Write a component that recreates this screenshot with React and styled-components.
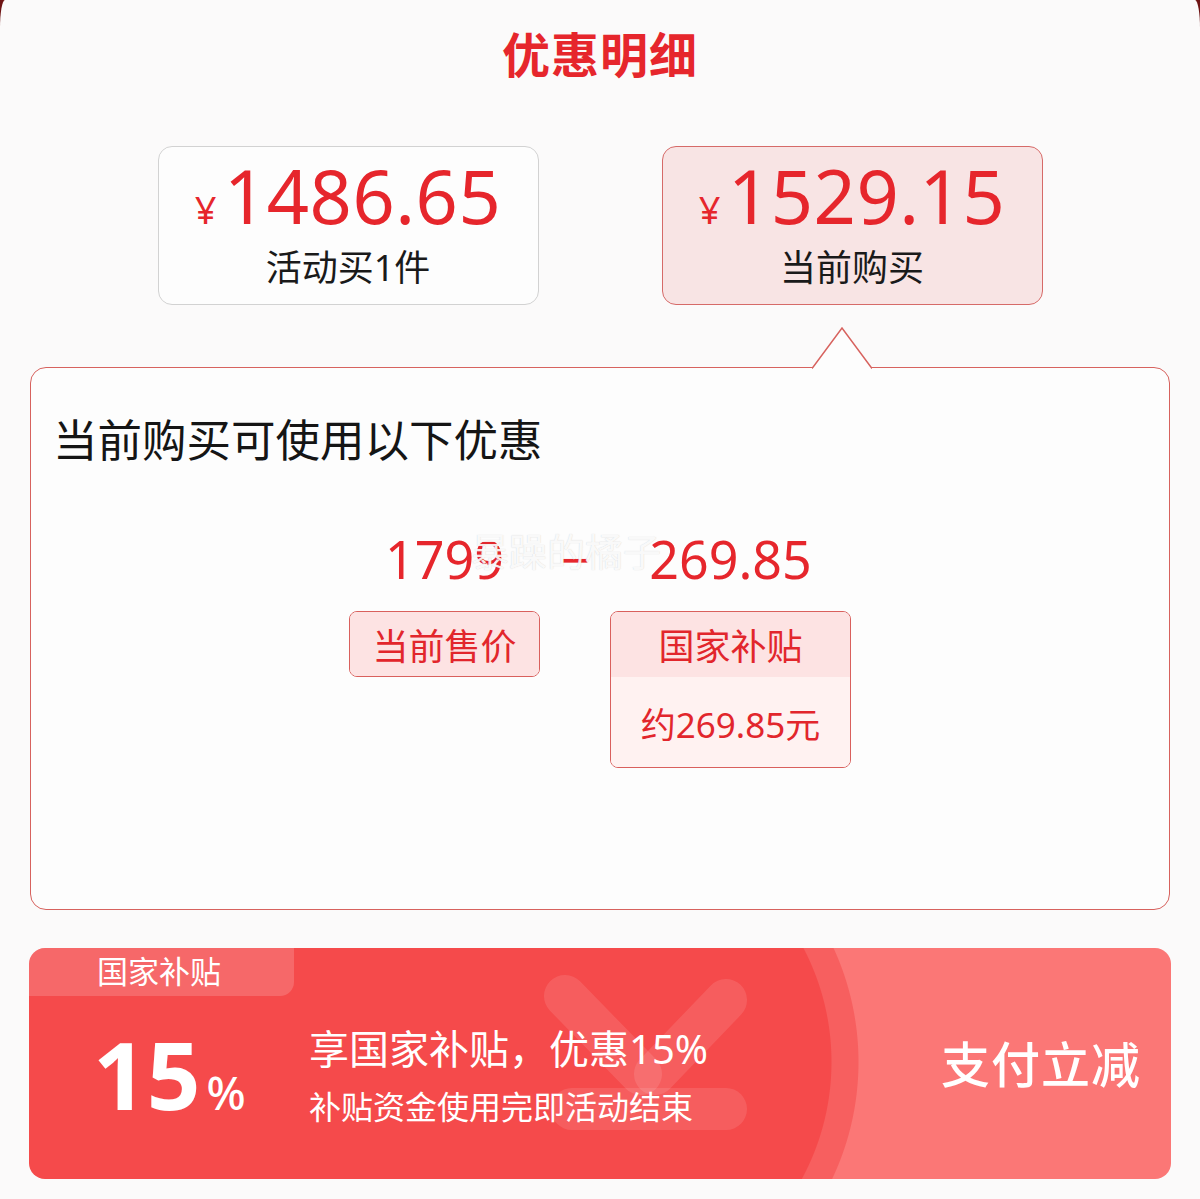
import React from "react";
import styled, { createGlobalStyle } from "styled-components";

const GlobalStyle = createGlobalStyle`
  html, body {
    margin: 0;
    padding: 0;
    background: #6e1414;
  }
  body {
    font-family: "Noto Sans", "Noto Sans CJK SC", sans-serif;
  }
`;

const Sheet = styled.div`
  width: 1200px;
  height: 1199px;
  box-sizing: border-box;
  background: #fbfafa;
  border-radius: 5px 5px 0 0 / 28px 28px 0 0;
  overflow: hidden;
  display: flex;
  flex-direction: column;
  align-items: center;
`;

const Title = styled.h1`
  margin: 26px 0 0;
  font-size: 48px;
  line-height: 58px;
  font-weight: 700;
  color: #e6262c;
  letter-spacing: 1px;
`;

const CardRow = styled.div`
  display: flex;
  gap: 123px;
  margin-top: 62px;
`;

const PriceCard = styled.div`
  width: 381px;
  height: 159px;
  box-sizing: border-box;
  border-radius: 14px;
  border: 1.5px solid ${(p) => (p.active ? "#d66a68" : "#d2d2d2")};
  background: ${(p) => (p.active ? "#f8e4e4" : "#fdfdfd")};
  display: flex;
  flex-direction: column;
  align-items: center;
  padding-top: 9px;
`;

const Price = styled.div`
  display: flex;
  align-items: baseline;
  color: #e6262c;
  font-size: 74px;
  line-height: 80px;
  letter-spacing: 0.5px;
`;

const Yen = styled.span`
  font-size: 38px;
  margin-right: 7px;
`;

const CardLabel = styled.div`
  margin-top: -3px;
  font-size: 36px;
  line-height: 44px;
  color: #1a1a1a;
`;

const Bubble = styled.div`
  position: relative;
  width: 1140px;
  height: 543px;
  box-sizing: border-box;
  margin-top: 62px;
  border: 1.5px solid #d7625e;
  border-radius: 16px;
  background: #fdfdfd;
  padding: 46px 0 0 22px;
`;

const Pointer = styled.svg`
  position: absolute;
  left: 781px;
  top: -42px;
`;

const BubbleHeading = styled.h2`
  margin: 0;
  font-size: 44.5px;
  line-height: 52px;
  font-weight: 400;
  color: #151515;
`;

const Formula = styled.div`
  display: flex;
  justify-content: center;
  margin: 63px 22px 0 0;
`;

const Column = styled.div`
  display: flex;
  flex-direction: column;
  align-items: center;
  width: ${(p) => p.w}px;
`;

const Amount = styled.div`
  font-size: 52px;
  line-height: 60px;
  color: #e6262c;
`;

const Minus = styled(Amount)`
  width: 70px;
  text-align: center;
`;

const Tag = styled.div`
  margin-top: 22px;
  width: 100%;
  box-sizing: border-box;
  border: 1.5px solid #d9605d;
  border-radius: 8px;
  overflow: hidden;
  color: #e2262c;
  font-size: 36px;
`;

const TagPart = styled.div`
  display: flex;
  align-items: center;
  justify-content: center;
  height: ${(p) => p.h}px;
  background: ${(p) => (p.light ? "#fff2f1" : "#fde3e3")};
  font-size: ${(p) => (p.light ? 35 : 36)}px;
`;

const Watermark = styled.div`
  position: absolute;
  left: 440px;
  top: 160px;
  font-size: 38px;
  line-height: 46px;
  color: rgba(255, 255, 255, 0.9);
  text-shadow: 0 0 1px rgba(120, 120, 120, 0.35);
  pointer-events: none;
`;

const Banner = styled.div`
  position: relative;
  width: 1142px;
  height: 231px;
  margin-top: 38px;
  border-radius: 16px;
  overflow: hidden;
  color: #fff;
  background:
    linear-gradient(to right, #f54a4b 0 557px, transparent 557px),
    radial-gradient(circle 272px at 557px 114px, #f54a4b 0 245px, #f75f5f 246px 272px, transparent 273px),
    #fb7776;
`;

const CoinMark = styled.svg`
  position: absolute;
  left: 0;
  top: 0;
`;

const BannerTab = styled.div`
  position: relative;
  width: 265px;
  height: 48px;
  box-sizing: border-box;
  padding-left: 68px;
  background: rgba(255, 255, 255, 0.17);
  border-bottom-right-radius: 14px;
  font-size: 31px;
  line-height: 46px;
`;

const BannerBody = styled.div`
  position: relative;
  display: flex;
  align-items: center;
  height: 183px;
  padding: 0 0 0 64px;
  box-sizing: border-box;
  margin-top: -12px;
`;

const Percent = styled.div`
  width: 216px;
  font-weight: 700;
  font-size: 94px;
  line-height: 100px;
  margin-top: 14px;
  span {
    font-size: 46px;
    font-weight: 500;
    margin-left: 6px;
  }
`;

const BannerText = styled.div`
  flex: 1;
  display: flex;
  flex-direction: column;
`;

const BannerMain = styled.div`
  font-size: 40px;
  line-height: 50px;
`;

const BannerSub = styled.div`
  font-size: 32px;
  line-height: 42px;
  margin-top: 12px;
`;

const PayCut = styled.div`
  width: 230px;
  font-size: 49px;
  font-weight: 500;
  line-height: 60px;
  letter-spacing: 1px;
  margin-bottom: 24px;
`;

export default function App() {
  return (
    <>
      <GlobalStyle />
      <Sheet>
        <Title>优惠明细</Title>
        <CardRow>
          <PriceCard>
            <Price>
              <Yen>¥</Yen>1486.65
            </Price>
            <CardLabel>活动买1件</CardLabel>
          </PriceCard>
          <PriceCard active>
            <Price>
              <Yen>¥</Yen>1529.15
            </Price>
            <CardLabel>当前购买</CardLabel>
          </PriceCard>
        </CardRow>
        <Bubble>
          <Pointer width="60" height="44" viewBox="0 0 60 44">
            <path d="M0 42.5 L30 2 L60 42.5" fill="#fdfdfd" stroke="#d7625e" strokeWidth="1.5" />
            <rect x="1" y="42.5" width="58" height="2" fill="#fdfdfd" />
          </Pointer>
          <BubbleHeading>当前购买可使用以下优惠</BubbleHeading>
          <Formula>
            <Column w={191}>
              <Amount>1799</Amount>
              <Tag>
                <TagPart h={64}>当前售价</TagPart>
              </Tag>
            </Column>
            <Minus>−</Minus>
            <Column w={241}>
              <Amount>269.85</Amount>
              <Tag>
                <TagPart h={65}>国家补贴</TagPart>
                <TagPart h={90} light>
                  约269.85元
                </TagPart>
              </Tag>
            </Column>
          </Formula>
          <Watermark>暴躁的橘子</Watermark>
        </Bubble>
        <Banner>
          <CoinMark width="1142" height="231" viewBox="0 0 1142 231">
            <g stroke="rgba(255,255,255,0.11)" strokeWidth="42" strokeLinecap="round" fill="none">
              <line x1="536" y1="48" x2="612" y2="126" />
              <line x1="697" y1="52" x2="626" y2="126" />
              <line x1="543" y1="161" x2="697" y2="161" />
            </g>
          </CoinMark>
          <BannerTab>国家补贴</BannerTab>
          <BannerBody>
            <Percent>
              15<span>%</span>
            </Percent>
            <BannerText>
              <BannerMain>享国家补贴，优惠15%</BannerMain>
              <BannerSub>补贴资金使用完即活动结束</BannerSub>
            </BannerText>
            <PayCut>支付立减</PayCut>
          </BannerBody>
        </Banner>
      </Sheet>
    </>
  );
}
